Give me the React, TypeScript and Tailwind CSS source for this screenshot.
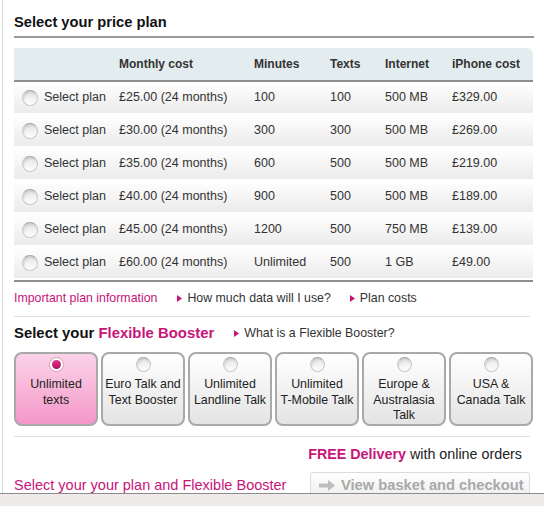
import React from 'react';

const plans = [
  { cost: '£25.00 (24 months)', minutes: '100', texts: '100', internet: '500 MB', phone: '£329.00' },
  { cost: '£30.00 (24 months)', minutes: '300', texts: '300', internet: '500 MB', phone: '£269.00' },
  { cost: '£35.00 (24 months)', minutes: '600', texts: '500', internet: '500 MB', phone: '£219.00' },
  { cost: '£40.00 (24 months)', minutes: '900', texts: '500', internet: '500 MB', phone: '£189.00' },
  { cost: '£45.00 (24 months)', minutes: '1200', texts: '500', internet: '750 MB', phone: '£139.00' },
  { cost: '£60.00 (24 months)', minutes: 'Unlimited', texts: '500', internet: '1 GB', phone: '£49.00' },
];

const boosters = [
  ['Unlimited', 'texts'],
  ['Euro Talk and', 'Text Booster'],
  ['Unlimited', 'Landline Talk'],
  ['Unlimited', 'T-Mobile Talk'],
  ['Europe &', 'Australasia', 'Talk'],
  ['USA &', 'Canada Talk'],
];

const cols = 'grid grid-cols-[30px_75px_135px_76px_55px_67px_1fr] items-center';

function Arrow() {
  return (
    <svg width="5" height="7" viewBox="0 0 5 7" className="mr-[5px]">
      <polygon points="0,0 5,3.5 0,7" fill="#c81479" />
    </svg>
  );
}

function Radio({ size = 15, checked = false }: { size?: number; checked?: boolean }) {
  if (checked) {
    return (
      <div className="w-[15px] h-[15px] rounded-full bg-white border border-[#c9a0b4] flex items-center justify-center">
        <div className="w-[9px] h-[9px] rounded-full bg-linear-to-b from-[#e0328c] to-[#b50a63]" />
      </div>
    );
  }
  return (
    <div
      className="rounded-full border border-[#c8c8c8] border-t-[#a4a4a4] bg-linear-to-b from-[#e4e4e4] to-white shadow-[inset_1px_2px_2px_rgba(0,0,0,0.1)]"
      style={{ width: size, height: size }}
    />
  );
}

export default function App() {
  return (
    <div className="w-[544px] h-[506px] bg-[#efebeb] font-['Liberation_Sans',Arial,sans-serif] text-[#333]">
      <div className="h-[494px] bg-white border-b border-[#8c8c8c] pl-[2px] overflow-hidden">
        <div className="h-full border-l border-[#d9d9d9] pl-[11px] pr-[10px]">
          {/* price plan heading */}
          <div className="pt-[13px] pb-[5px] border-b-2 border-[#9a9a9a]">
            <h1 className="text-[14.7px] leading-[18px] font-bold text-[#111]">Select your price plan</h1>
          </div>

          {/* table */}
          <div className="mt-[10px] w-[519px]">
            <div className={`${cols} h-[34px] bg-[#e3ecef] border-b-2 border-[#8e8e8e] rounded-tr-md text-[12px] font-bold text-[#333]`}>
              <div />
              <div />
              <div>Monthly cost</div>
              <div>Minutes</div>
              <div>Texts</div>
              <div>Internet</div>
              <div>iPhone cost</div>
            </div>
            <div className="flex flex-col gap-[2px] pb-[2px] border-b-2 border-[#8e8e8e]">
              {plans.map((p) => (
                <div key={p.cost} className={`${cols} h-[31px] bg-linear-to-b from-white to-[#ebebeb] text-[12.5px] text-[#333]`}>
                  <div className="pl-[8px]">
                    <Radio size={16} />
                  </div>
                  <div>Select plan</div>
                  <div>{p.cost}</div>
                  <div>{p.minutes}</div>
                  <div>{p.texts}</div>
                  <div>{p.internet}</div>
                  <div>{p.phone}</div>
                </div>
              ))}
            </div>
          </div>

          {/* links */}
          <div className="h-[35px] pb-[2px] flex items-center border-b border-[#dedede] text-[12.35px] w-[516px]">
            <span className="text-[#c81479] mr-[20px]">Important plan information</span>
            <Arrow />
            <span className="mr-[19px]">How much data will I use?</span>
            <Arrow />
            <span>Plan costs</span>
          </div>

          {/* booster heading */}
          <div className="h-[32px] flex items-center">
            <h2 className="text-[14.9px] font-bold text-[#111] mr-[20px]">
              Select your <span className="text-[#c81479]">Flexible Booster</span>
            </h2>
            <Arrow />
            <span className="text-[12.35px]">What is a Flexible Booster?</span>
          </div>

          {/* boosters */}
          <div className="mt-[3px] grid grid-cols-6 gap-[3px] w-[519px]">
            {boosters.map((lines, i) => (
              <div
                key={i}
                className={`h-[74px] rounded-[8px] border-2 border-[#a9a9a9] pt-[3px] flex flex-col items-center ${
                  i === 0 ? 'bg-linear-to-b from-[#fbd3e8] to-[#f397c9]' : 'bg-linear-to-b from-white to-[#e4e4e4]'
                }`}
              >
                <Radio size={15} checked={i === 0} />
                <div className="mt-[5px] text-[12.4px] leading-[15.5px] text-[#222] text-center">
                  {lines.map((l) => (
                    <div key={l}>{l}</div>
                  ))}
                </div>
              </div>
            ))}
          </div>

          <div className="mt-[10px] border-t border-[#dedede] w-[516px]" />

          {/* delivery */}
          <div className="h-[36px] flex items-center justify-end pr-[12px] text-[14.3px] text-[#222]">
            <span className="font-bold text-[#c81479] mr-[4px]">FREE Delivery</span>
            with online orders
          </div>

          {/* bottom row */}
          <div className="flex items-start justify-between -mt-[1px]">
            <span className="text-[14.5px] leading-[26px] text-[#c81479]">Select your your plan and Flexible Booster</span>
            <button
              type="button"
              disabled
              className="mr-[4px] w-[220px] h-[26px] border border-[#dcdcdc] rounded-[2px] bg-linear-to-b from-white to-[#eeeeee] flex items-center pl-[8px] text-[14.7px] font-bold text-[#a9a9a9]"
            >
              <svg width="16" height="11" viewBox="0 0 16 11" className="mr-[6px]">
                <path d="M0 3.5h9V0l7 5.5-7 5.5V7.5H0z" fill="#bdbdbd" />
              </svg>
              View basket and checkout
            </button>
          </div>
        </div>
      </div>
    </div>
  );
}
